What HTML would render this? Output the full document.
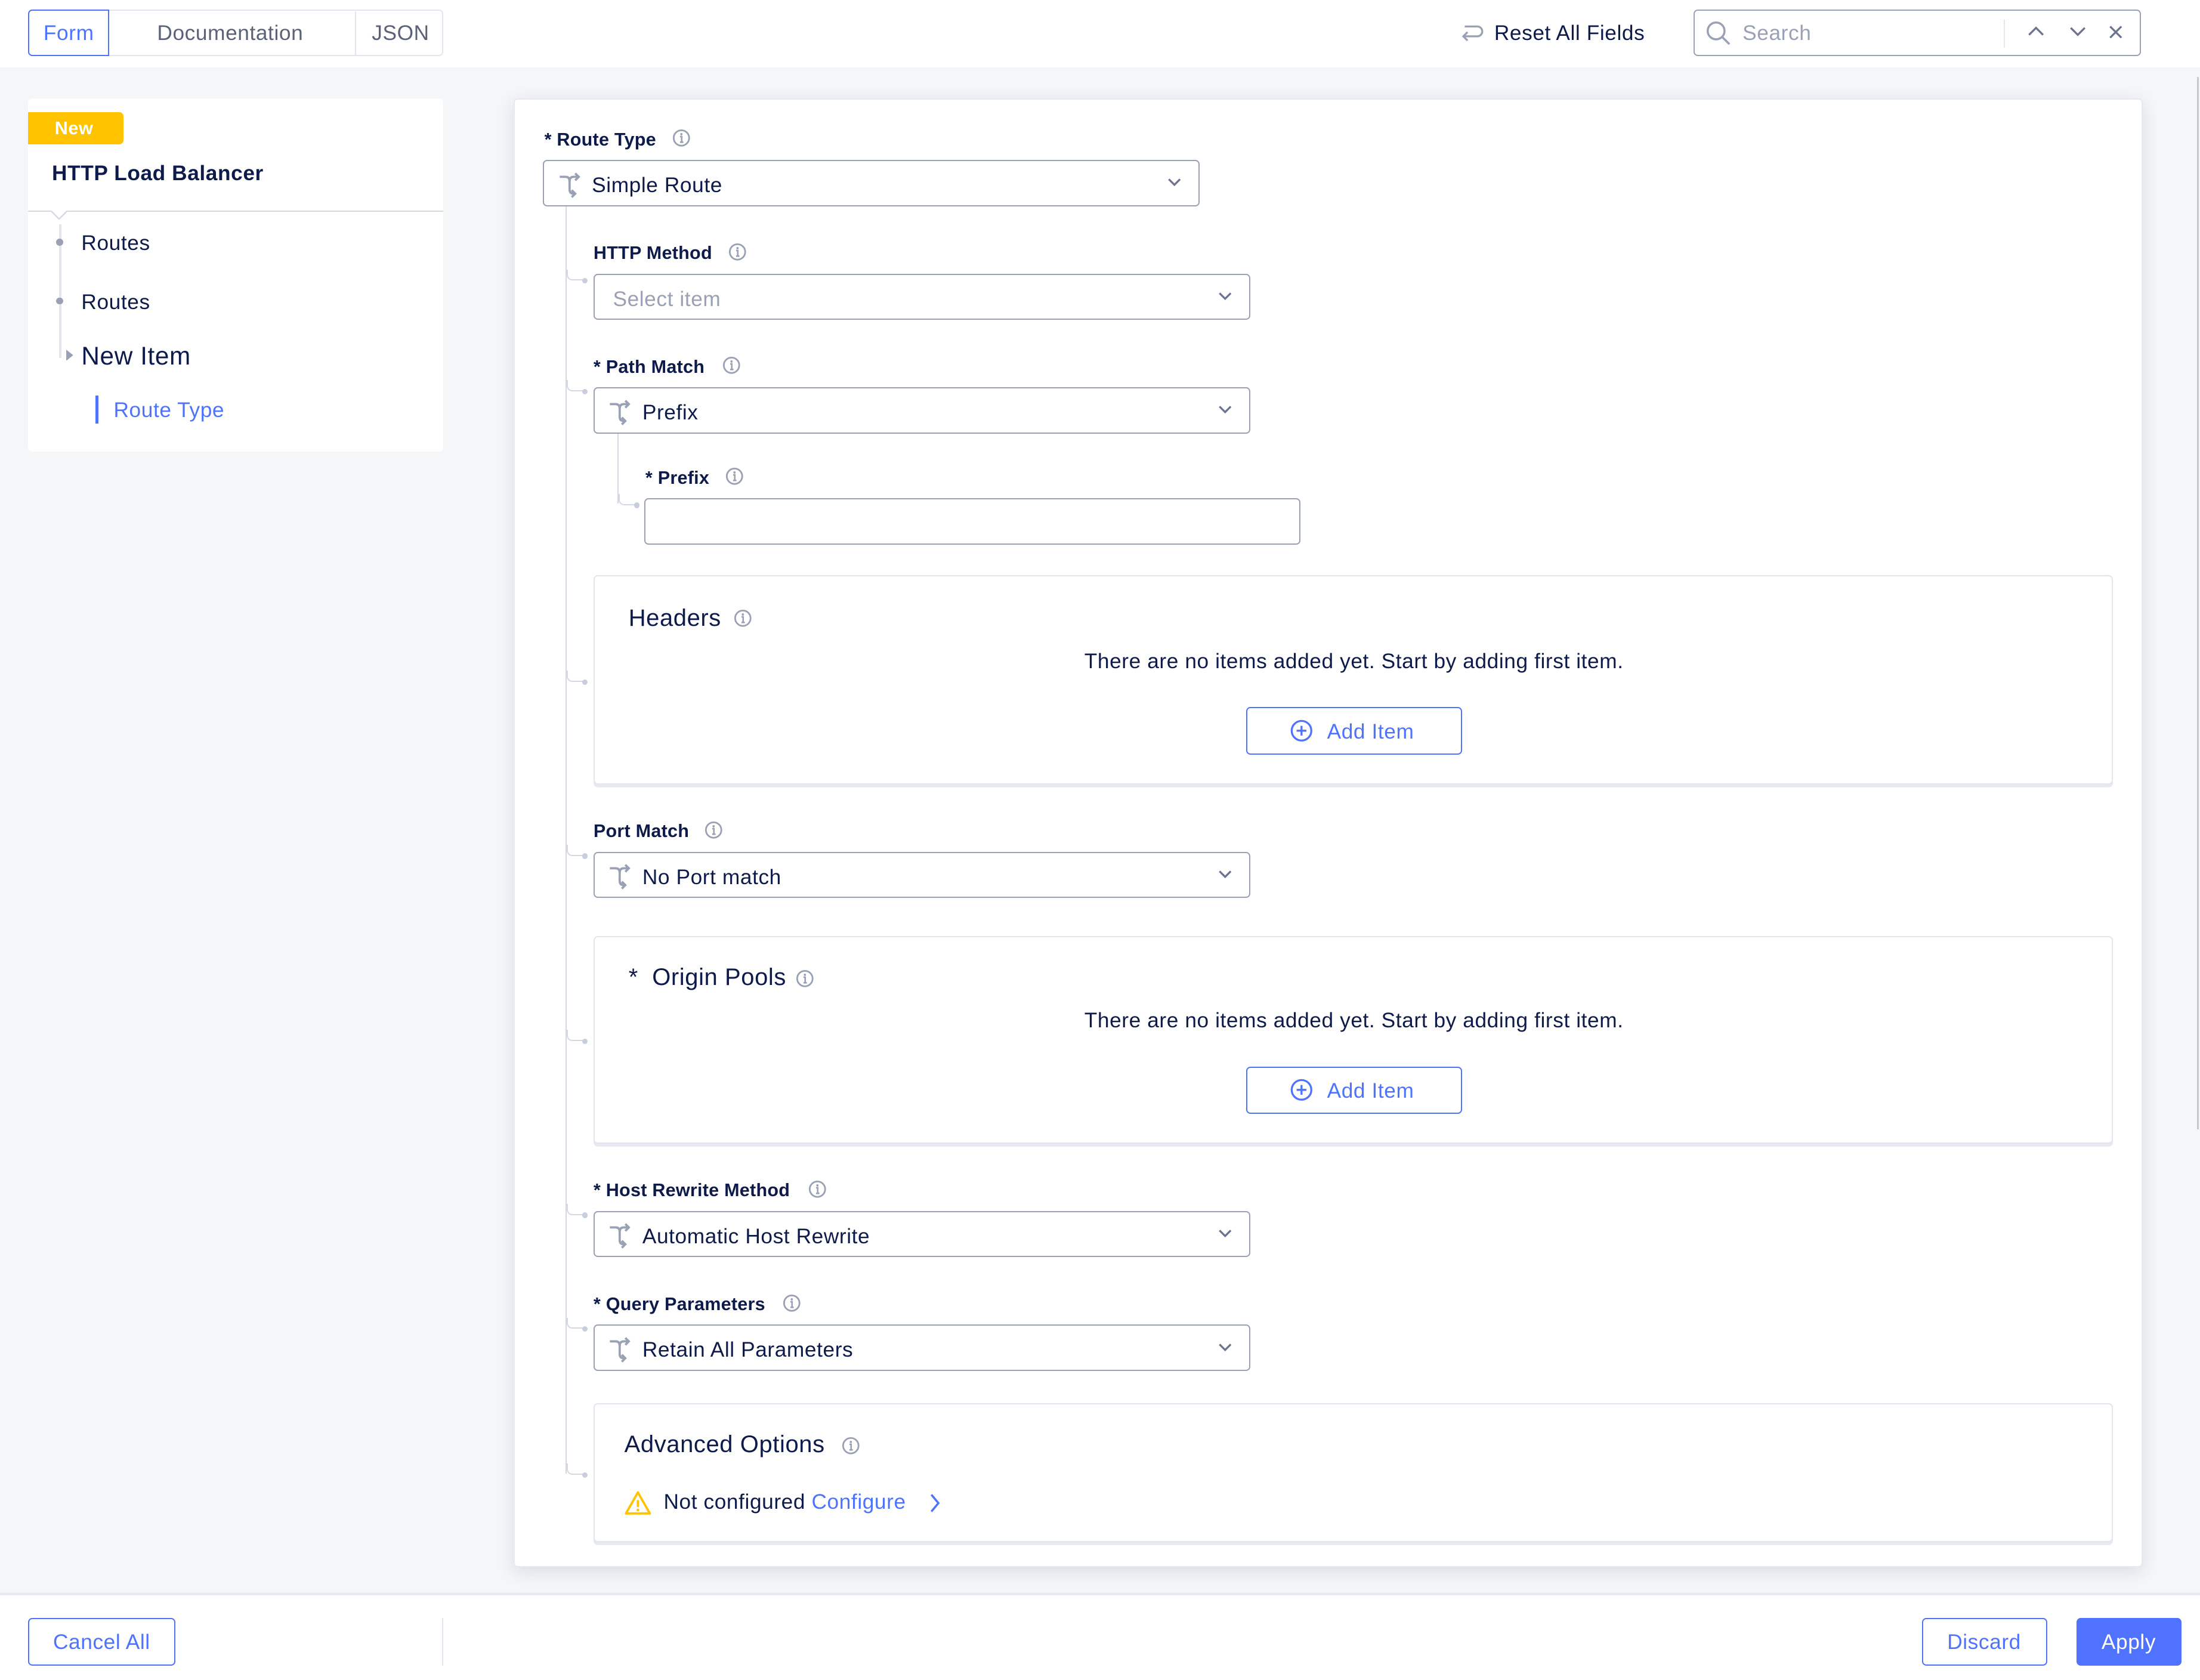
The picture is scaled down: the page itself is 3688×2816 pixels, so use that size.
<!DOCTYPE html>
<html><head><meta charset="utf-8">
<style>
*{box-sizing:border-box;margin:0;padding:0}
html,body{width:3688px;height:2816px;overflow:hidden;background:#fff}
#r{position:absolute;left:0;top:0;width:1568px;height:1197px;zoom:2.352;font-family:"Liberation Sans",sans-serif;color:#0d1a4a;background:#fff;letter-spacing:.25px}
.a{position:absolute}
.t{position:absolute;white-space:nowrap;line-height:1}
.lbl{font-size:13px;font-weight:bold;letter-spacing:.1px}
.sel{position:absolute;height:33px;border:1px solid #9aa1b5;border-radius:3px;background:#fff}
.sel .v{position:absolute;left:34px;top:9px;font-size:15px}
.sel svg.r{position:absolute;left:10px;top:7px}
.sel svg.c{position:absolute;right:12px;top:12px}
.box{position:absolute;left:423px;width:1083px;border:1px solid #e3e6ee;border-radius:3px;background:#fff;box-shadow:0 2px 0 #e6e9f1}
.btn{position:absolute;border:1px solid #4f73ff;border-radius:3px;color:#4f73ff;font-size:15px;background:#fff}
.conn{position:absolute;width:12px;height:8px;border-left:1px solid #d4d8e2;border-bottom:1px solid #d4d8e2;border-bottom-left-radius:4px}
.conn:after{content:"";position:absolute;right:-3px;bottom:-3px;width:4px;height:4px;border-radius:50%;background:#c9cede}
</style></head><body><div id="r">
<svg width="0" height="0" style="position:absolute"><defs>
<g id="route"><path d="M1 4h4c2 0 3 1 3 3v6c0 2 1 3 3 3" fill="none" stroke="#9aa1b5" stroke-width="1.6"/><path d="M8 7c0-2 1-3 3-3h3M12 1.5l2.5 2.5-2.5 2.5M11 16h0M9.5 13.5l2.5 2.5-2.5 2.5" fill="none" stroke="#9aa1b5" stroke-width="1.6"/></g>
<g id="chev"><path d="M1 1l4 4 4-4" fill="none" stroke="#6b7390" stroke-width="1.4"/></g>
<g id="info"><circle cx="6.5" cy="6.5" r="5.5" fill="none" stroke="#9aa1b5" stroke-width="1.2"/><path d="M5.5 5.5h1.2v4M5.5 9.5h2.4" stroke="#9aa1b5" stroke-width="1.1" fill="none"/><circle cx="6.5" cy="3.8" r=".8" fill="#9aa1b5"/></g>
<g id="plus"><circle cx="8" cy="8" r="7" fill="none" stroke="#4f73ff" stroke-width="1.4"/><path d="M8 4.5v7M4.5 8h7" stroke="#4f73ff" stroke-width="1.4"/></g>
</defs></svg>

<div class="a" style="left:20px;top:7px;width:296px;height:33px;border:1px solid #e3e6ee;border-radius:3px"></div>
<div class="a" style="left:20px;top:7px;width:58px;height:33px;border:1px solid #4f73ff;border-radius:3px 0 0 3px"></div>
<div class="a" style="left:253px;top:8px;width:1px;height:31px;background:#e3e6ee"></div>
<div class="t" style="left:31px;top:16px;font-size:15px;color:#4f73ff">Form</div>
<div class="t" style="left:112px;top:16px;font-size:15px;color:#5b6278">Documentation</div>
<div class="t" style="left:265px;top:16px;font-size:15px;color:#5b6278">JSON</div>
<svg class="a" style="left:1040px;top:15px" width="18" height="18"><path d="M4 4h9a3.5 3.5 0 0 1 0 7H3M6 8l-3 3 3 3" fill="none" stroke="#9aa1b5" stroke-width="1.4"/></svg>
<div class="t" style="left:1065px;top:16px;font-size:15px">Reset All Fields</div>
<div class="a" style="left:1207px;top:7px;width:319px;height:33px;border:1px solid #9aa1b5;border-radius:3px"></div>
<svg class="a" style="left:1215px;top:14px" width="20" height="20"><circle cx="8" cy="8" r="6" fill="none" stroke="#9aa1b5" stroke-width="1.5"/><path d="M12.5 12.5l5 5" stroke="#9aa1b5" stroke-width="1.5"/></svg>
<div class="t" style="left:1242px;top:16px;font-size:15px;color:#9aa1b5">Search</div>
<div class="a" style="left:1428px;top:14px;width:1px;height:20px;background:#e3e6ee"></div>
<svg class="a" style="left:1445px;top:18px" width="12" height="10"><path d="M1 7l5-5 5 5" fill="none" stroke="#6b7390" stroke-width="1.4"/></svg>
<svg class="a" style="left:1475px;top:18px" width="12" height="10"><path d="M1 2l5 5 5-5" fill="none" stroke="#6b7390" stroke-width="1.4"/></svg>
<svg class="a" style="left:1503px;top:18px" width="10" height="10"><path d="M1 1l8 8M9 1l-8 8" stroke="#6b7390" stroke-width="1.4"/></svg>

<div class="a" style="left:0;top:48px;width:1568px;height:1087px;background:#f5f6f8"></div>
<div class="a" style="left:0;top:1135px;width:1568px;height:2px;background:#e6e9f1"></div>
<div class="a" style="left:1566px;top:55px;width:1px;height:750px;background:#c4c8d4"></div>

<div class="a" style="left:20px;top:70px;width:296px;height:252px;background:#fff;border-radius:3px"></div>
<div class="a" style="left:20px;top:80px;width:68px;height:23px;background:#ffc300;border-radius:0 3px 3px 0"></div>
<div class="t" style="left:39px;top:85px;font-size:13px;font-weight:bold;color:#fff">New</div>
<div class="t" style="left:37px;top:116px;font-size:15px;font-weight:bold">HTTP Load Balancer</div>
<div class="a" style="left:20px;top:150px;width:296px;height:1px;background:#d4d8e2"></div>
<svg class="a" style="left:36px;top:150px" width="12" height="8"><path d="M0 0l6 6 6-6" fill="#fff" stroke="#d4d8e2"/></svg>
<div class="a" style="left:42px;top:160px;width:2px;height:95px;background:#e3e6ee"></div>
<div class="a" style="left:40px;top:170px;width:5px;height:5px;border-radius:50%;background:#9aa1b5"></div>
<div class="a" style="left:40px;top:212px;width:5px;height:5px;border-radius:50%;background:#9aa1b5"></div>
<svg class="a" style="left:47px;top:249px" width="6" height="8"><path d="M0 0l5 4-5 4z" fill="#9aa1b5"/></svg>
<div class="t" style="left:58px;top:166px;font-size:15px">Routes</div>
<div class="t" style="left:58px;top:208px;font-size:15px">Routes</div>
<div class="t" style="left:58px;top:245px;font-size:18px">New Item</div>
<div class="a" style="left:68px;top:282px;width:2px;height:20px;background:#4f73ff"></div>
<div class="t" style="left:81px;top:285px;font-size:15px;color:#4f73ff">Route Type</div>

<div class="a" style="left:366px;top:70px;width:1161px;height:1047px;background:#fff;border:1px solid #e6e9f1;border-radius:3px;box-shadow:0 3px 12px rgba(30,40,80,.12)"></div>

<div class="t lbl" style="left:388px;top:93px">* Route Type</div>
<svg class="a" style="left:479px;top:92px" width="14" height="14"><use href="#info"/></svg>
<div class="sel" style="left:387px;top:114px;width:468px"><svg class="r" width="16" height="20"><use href="#route"/></svg><div class="v">Simple Route</div><svg class="c" width="10" height="7"><use href="#chev"/></svg></div>

<div class="a" style="left:403px;top:147px;width:1px;height:903px;background:#d4d8e2"></div>

<div class="t lbl" style="left:423px;top:174px">HTTP Method</div>
<svg class="a" style="left:519px;top:173px" width="14" height="14"><use href="#info"/></svg>
<div class="conn" style="left:404px;top:192px"></div>
<div class="sel" style="left:423px;top:195px;width:468px"><div class="v" style="left:13px;color:#9aa1b5">Select item</div><svg class="c" width="10" height="7"><use href="#chev"/></svg></div>

<div class="t lbl" style="left:423px;top:255px">* Path Match</div>
<svg class="a" style="left:515px;top:254px" width="14" height="14"><use href="#info"/></svg>
<div class="conn" style="left:404px;top:271px"></div>
<div class="sel" style="left:423px;top:276px;width:468px"><svg class="r" width="16" height="20"><use href="#route"/></svg><div class="v">Prefix</div><svg class="c" width="10" height="7"><use href="#chev"/></svg></div>

<div class="a" style="left:440px;top:309px;width:1px;height:50px;background:#d4d8e2"></div>
<div class="t lbl" style="left:460px;top:334px">* Prefix</div>
<svg class="a" style="left:517px;top:333px" width="14" height="14"><use href="#info"/></svg>
<div class="conn" style="left:441px;top:352px"></div>
<div class="sel" style="left:459px;top:355px;width:468px"></div>

<div class="box" style="top:410px;height:149px"></div>
<div class="t" style="left:448px;top:432px;font-size:17px">Headers</div>
<svg class="a" style="left:523px;top:434px" width="14" height="14"><use href="#info"/></svg>
<div class="t" style="left:0;width:1930px;text-align:center;top:464px;font-size:15px">There are no items added yet. Start by adding first item.</div>
<div class="btn" style="left:888px;top:504px;width:154px;height:34px"><svg class="a" style="left:31px;top:8px" width="16" height="16"><use href="#plus"/></svg><span class="t" style="left:57px;top:9px">Add Item</span></div>
<div class="conn" style="left:404px;top:478px"></div>

<div class="t lbl" style="left:423px;top:586px">Port Match</div>
<svg class="a" style="left:502px;top:585px" width="14" height="14"><use href="#info"/></svg>
<div class="conn" style="left:404px;top:602px"></div>
<div class="sel" style="left:423px;top:607px;width:468px"><svg class="r" width="16" height="20"><use href="#route"/></svg><div class="v">No Port match</div><svg class="c" width="10" height="7"><use href="#chev"/></svg></div>

<div class="box" style="top:667px;height:148px"></div>
<div class="t" style="left:448px;top:688px;font-size:17px">*&nbsp; Origin Pools</div>
<svg class="a" style="left:567px;top:691px" width="14" height="14"><use href="#info"/></svg>
<div class="t" style="left:0;width:1930px;text-align:center;top:720px;font-size:15px">There are no items added yet. Start by adding first item.</div>
<div class="btn" style="left:888px;top:760px;width:154px;height:34px"><svg class="a" style="left:31px;top:8px" width="16" height="16"><use href="#plus"/></svg><span class="t" style="left:57px;top:9px">Add Item</span></div>
<div class="conn" style="left:404px;top:734px"></div>

<div class="t lbl" style="left:423px;top:842px">* Host Rewrite Method</div>
<svg class="a" style="left:576px;top:841px" width="14" height="14"><use href="#info"/></svg>
<div class="conn" style="left:404px;top:858px"></div>
<div class="sel" style="left:423px;top:863px;width:468px"><svg class="r" width="16" height="20"><use href="#route"/></svg><div class="v">Automatic Host Rewrite</div><svg class="c" width="10" height="7"><use href="#chev"/></svg></div>

<div class="t lbl" style="left:423px;top:923px">* Query Parameters</div>
<svg class="a" style="left:558px;top:922px" width="14" height="14"><use href="#info"/></svg>
<div class="conn" style="left:404px;top:939px"></div>
<div class="sel" style="left:423px;top:944px;width:468px"><svg class="r" width="16" height="20"><use href="#route"/></svg><div class="v">Retain All Parameters</div><svg class="c" width="10" height="7"><use href="#chev"/></svg></div>

<div class="box" style="top:1000px;height:99px"></div>
<div class="t" style="left:445px;top:1021px;font-size:17px">Advanced Options</div>
<svg class="a" style="left:600px;top:1024px" width="14" height="14"><use href="#info"/></svg>
<svg class="a" style="left:445px;top:1062px" width="19" height="18"><path d="M9.5 1.5L18 16.5H1z" fill="none" stroke="#ffc300" stroke-width="1.6" stroke-linejoin="round"/><path d="M9.5 7v5" stroke="#ffc300" stroke-width="1.6"/><circle cx="9.5" cy="14" r="1" fill="#ffc300"/></svg>
<div class="t" style="left:473px;top:1063px;font-size:15px">Not configured <span style="color:#4f73ff">Configure</span></div>
<svg class="a" style="left:663px;top:1064px" width="8" height="14"><path d="M1 1l5 6-5 6" fill="none" stroke="#4f73ff" stroke-width="1.5"/></svg>
<div class="conn" style="left:404px;top:1043px"></div>

<div class="btn" style="left:20px;top:1153px;width:105px;height:34px"><span class="t" style="left:17px;top:9px">Cancel All</span></div>
<div class="a" style="left:315px;top:1153px;width:1px;height:34px;background:#e3e6ee"></div>
<div class="btn" style="left:1370px;top:1153px;width:89px;height:34px"><span class="t" style="left:17px;top:9px">Discard</span></div>
<div class="btn" style="left:1480px;top:1153px;width:75px;height:34px;background:#4f73ff;color:#fff"><span class="t" style="left:17px;top:9px">Apply</span></div>
</div></body></html>
